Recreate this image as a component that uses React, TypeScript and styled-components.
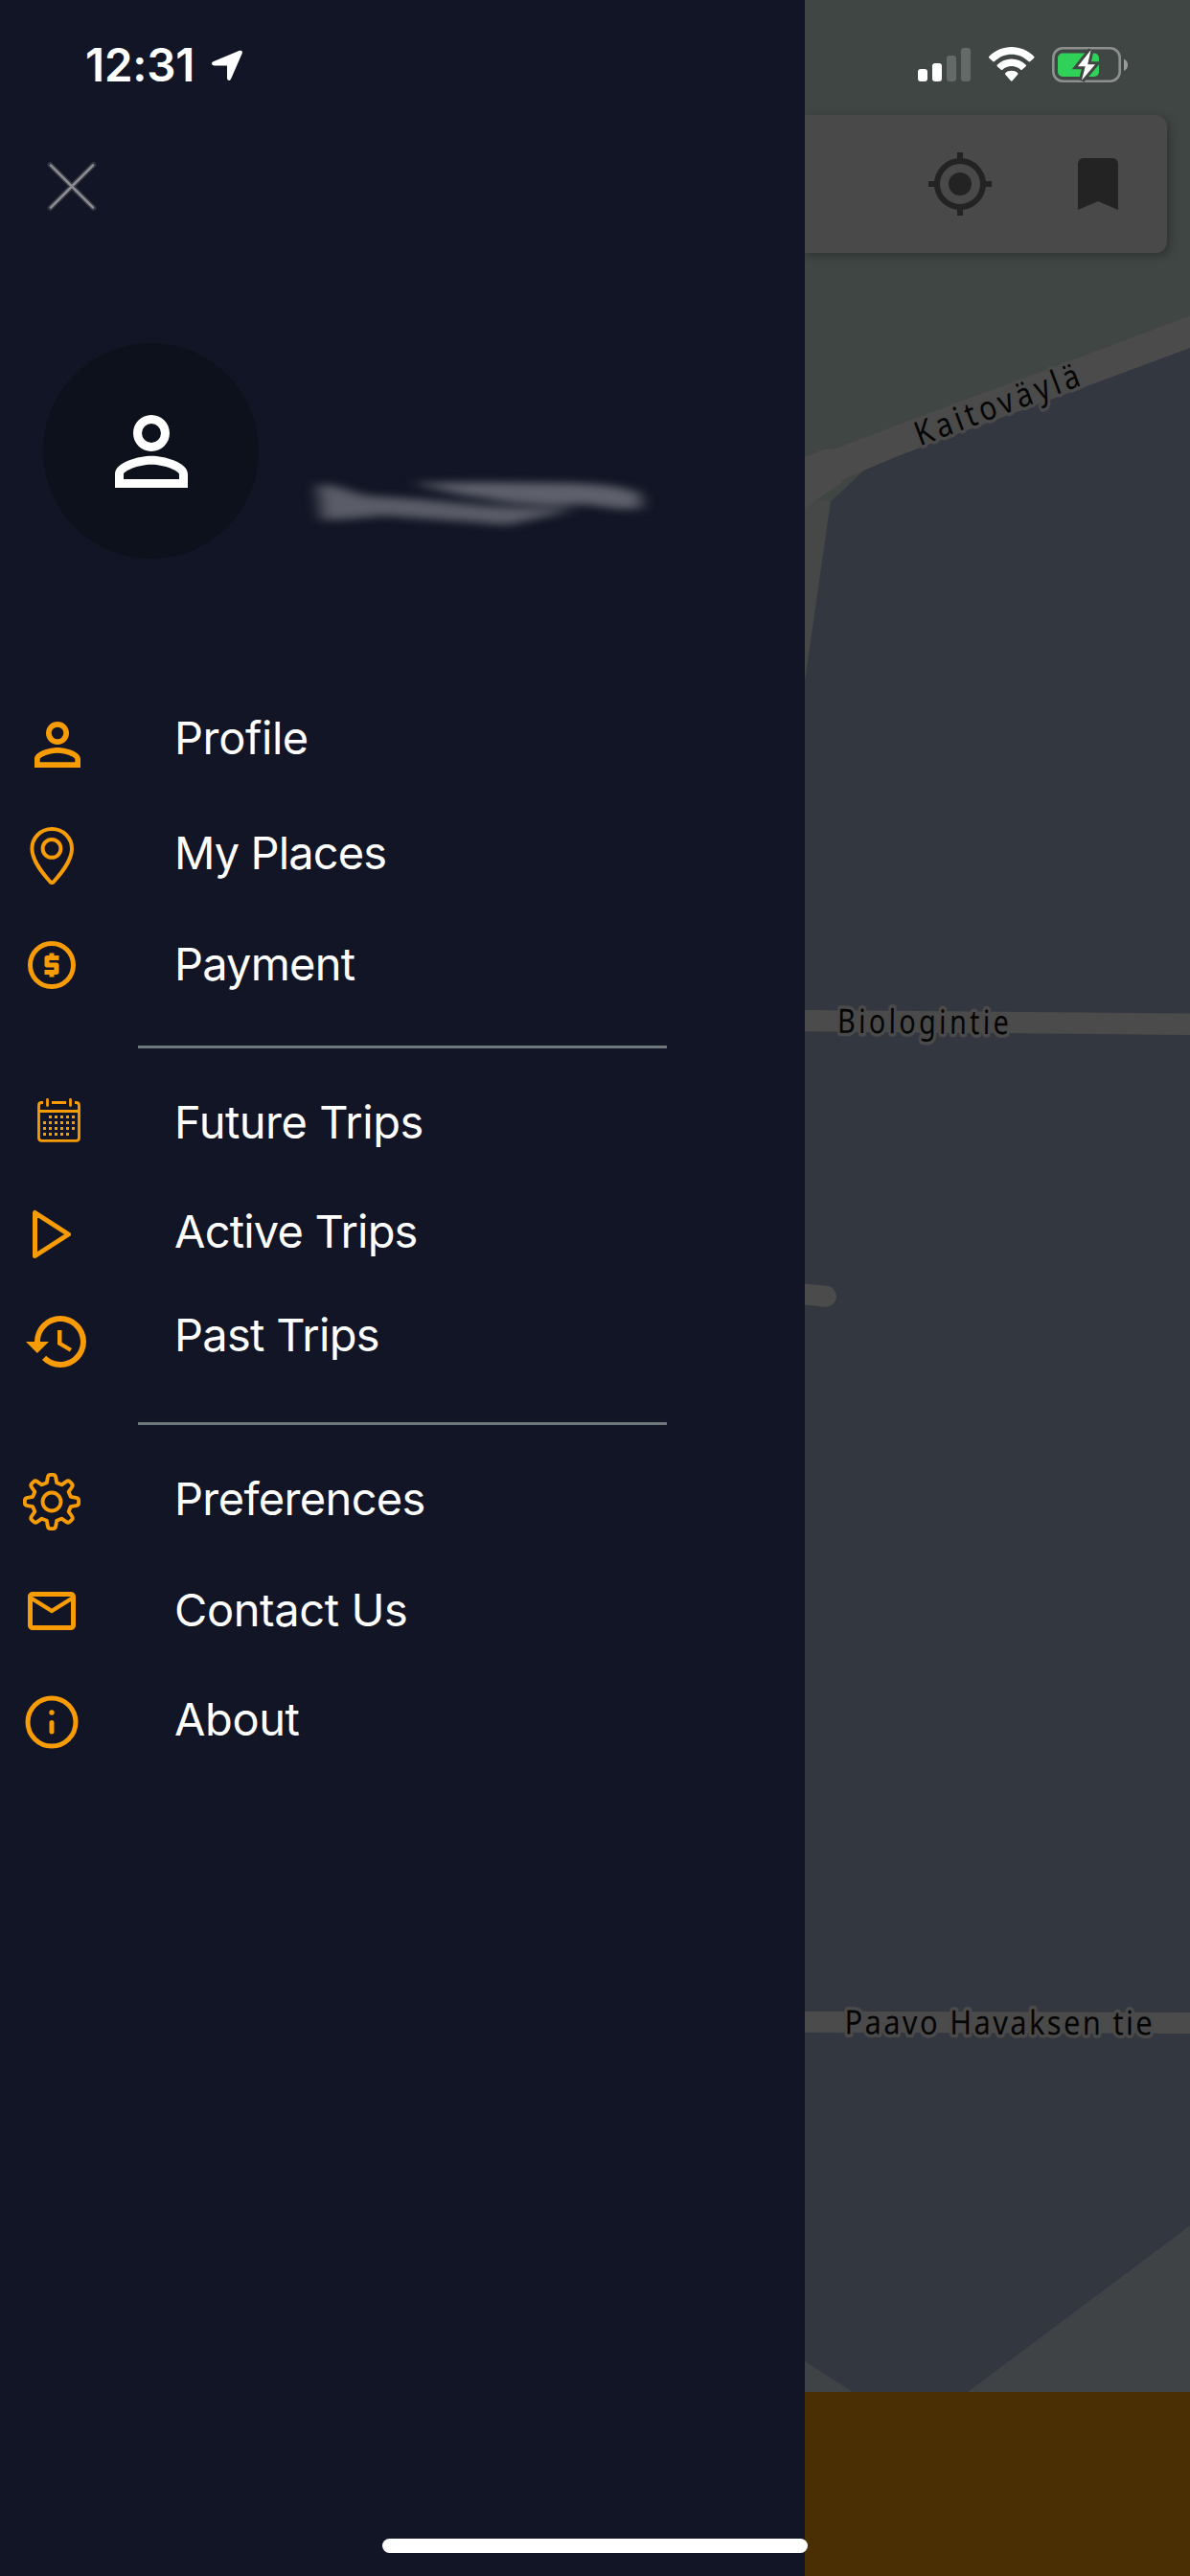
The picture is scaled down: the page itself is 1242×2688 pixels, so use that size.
import React from "react";
import styled, { createGlobalStyle } from "styled-components";

const GlobalStyle = createGlobalStyle`
  * { box-sizing: border-box; }
  body { margin: 0; background: #121525; }
  svg { display: block; flex: none; overflow: visible; }
`;

const Screen = styled.div`
  position: relative;
  display: flex;
  width: 1242px;
  height: 2688px;
  overflow: hidden;
  font-family: Inter, "Liberation Sans", sans-serif;
`;

const StatusBar = styled.header`
  position: absolute;
  inset: 0 0 auto 0;
  z-index: 2;
  display: flex;
  align-items: flex-start;
  justify-content: space-between;
  height: 132px;
  padding: 38px 64px 0 89px;
`;

const Clock = styled.div`
  display: flex;
  align-items: center;
  height: 60px;
  gap: 16px;
  color: #fff;
  font-size: 47.5px;
  font-weight: 600;
  line-height: 60px;
  letter-spacing: -0.2px;
`;

const Time = styled.span`
  width: 116px;
  white-space: nowrap;
`;

const Indicators = styled.div`
  display: flex;
  gap: 19px;
  padding-top: 11px;
`;

const Drawer = styled.nav`
  display: flex;
  flex-direction: column;
  flex: none;
  width: 840px;
  background: #121525;
`;

const CloseButton = styled.button`
  width: 60px;
  height: 60px;
  margin: 164px 0 0 45px;
  padding: 0;
  border: 0;
  background: none;
`;

const Account = styled.section`
  display: flex;
  align-items: flex-start;
  height: 225px;
  margin: 134px 0 157px 45px;
`;

const Avatar = styled.div`
  display: flex;
  align-items: center;
  justify-content: center;
  flex: none;
  width: 225px;
  height: 225px;
  border-radius: 50%;
  background: #0d111b;
  color: #fff;
`;

const NameSmudge = styled.svg`
  margin: 122px 0 0 40px;
`;

const MenuRow = styled.a<{ $height: number }>`
  display: flex;
  align-items: flex-start;
  height: ${(p) => p.$height}px;
  color: #fff;
`;

const IconSlot = styled.span<{ $shift: number }>`
  flex: none;
  width: 158px;
  margin: ${(p) => p.$shift}px 0 0 24px;
  color: #f79c04;
`;

const Label = styled.span<{ $tracking: number }>`
  font-size: 47px;
  font-weight: 400;
  line-height: 60px;
  letter-spacing: ${(p) => p.$tracking}px;
  white-space: nowrap;
`;

const Divider = styled.hr`
  flex: none;
  width: 552px;
  height: 3px;
  margin: 0 0 47px 144px;
  border: 0;
  background: #6e777b;
`;

const MapPane = styled.main`
  position: relative;
  display: flex;
  flex-direction: column;
  justify-content: space-between;
  width: 402px;
  padding-top: 120px;
  overflow: hidden;
`;

const MapCanvas = styled.svg`
  position: absolute;
  inset: 0;
`;

const SearchBar = styled.div`
  position: relative;
  display: flex;
  align-items: center;
  justify-content: flex-end;
  gap: 72px;
  width: 378px;
  height: 144px;
  padding-right: 36px;
  border-radius: 0 12px 12px 0;
  background: #494949;
  box-shadow: 3px 3px 8px rgba(20, 26, 24, 0.4);
  color: #232323;
`;

const BottomBar = styled.div`
  position: relative;
  height: 192px;
  background: #4a2e04;
`;

const HomeIndicator = styled.div`
  position: absolute;
  left: 399px;
  bottom: 24px;
  z-index: 2;
  width: 444px;
  height: 15px;
  border-radius: 8px;
  background: #fff;
`;

const personPath =
  "M12 5.9a2.1 2.1 0 1 1 0 4.2 2.1 2.1 0 0 1 0-4.2m0 9c2.97 0 6.1 1.46 6.1 2.1v1.1H5.9V17c0-.64 3.13-2.1 6.1-2.1M12 4C9.79 4 8 5.79 8 8s1.79 4 4 4 4-1.79 4-4-1.79-4-4-4zm0 9c-2.67 0-8 1.34-8 4v3h16v-3c0-2.66-5.33-4-8-4z";

const Person = ({ size }: { size: number }) => (
  <svg width={size} height={size} viewBox="0 0 24 24" fill="currentColor">
    <path d={personPath} />
  </svg>
);

const Pin = () => (
  <svg width="60" height="72" viewBox="0 0 60 72" fill="none" stroke="currentColor" strokeWidth="4">
    <path d="M30.2 8C18.6 8 9.4 17.2 9.4 28.6C9.4 42 22 56 28.3 63Q30.2 65 32.1 63C38.4 56 51 42 51 28.6C51 17.2 41.8 8 30.2 8Z" />
    <circle cx="30" cy="28.4" r="9.4" />
  </svg>
);

const Coin = () => (
  <svg width="60" height="60" viewBox="0 0 24 24" fill="currentColor">
    <circle cx="12" cy="12" r="9" fill="none" stroke="currentColor" strokeWidth="2" />
    <path d="M11 17h2v-1h1c.55 0 1-.45 1-1v-3c0-.55-.45-1-1-1h-3v-1h4V8h-2V7h-2v1h-1c-.55 0-1 .45-1 1v3c0 .55.45 1 1 1h3v1H9v2h2v1z" />
  </svg>
);

const calendarDots: [number, number][] = [];
for (let row = 0; row < 4; row++) {
  for (let col = 0; col < 6; col++) {
    if ((row === 0 && col === 0) || (row === 3 && col === 5)) continue;
    calendarDots.push([21 + col * 6, 30 + row * 6]);
  }
}

const Calendar = () => (
  <svg width="72" height="72" viewBox="0 0 72 72" fill="none" stroke="currentColor" strokeWidth="2.8">
    <path d="M21 16.500h-1.500q-3 0-3 3v33.800q0 3 3 3h36q3 0 3-3v-33.800q0-3-3-3H54M30 16.500h15M16.500 25.500h42" />
    <path d="M25.500 13.500v6M49.500 13.500v6" strokeLinecap="round" />
    {calendarDots.map(([x, y]) => (
      <rect key={`${x}-${y}`} x={x} y={y} width="3" height="3" fill="currentColor" stroke="none" />
    ))}
  </svg>
);

const Play = () => (
  <svg width="60" height="60" viewBox="0 0 60 60" fill="none" stroke="currentColor" strokeWidth="5" strokeLinejoin="round">
    <path d="M12.500 7.500v45L47.500 30z" />
  </svg>
);

const History = () => (
  <svg width="72" height="72" viewBox="0 0 24 24" fill="currentColor">
    <path d="M13 3a9 9 0 0 0-9 9H1l3.890 3.890.070.140L9 12H6c0-3.870 3.130-7 7-7s7 3.130 7 7-3.130 7-7 7c-1.930 0-3.680-.790-4.940-2.060l-1.420 1.420A8.954 8.954 0 0 0 13 21a9 9 0 0 0 0-18zm-1 5v5l4.280 2.540.720-1.210-3.500-2.080V8H12z" />
  </svg>
);

const gearPath = (() => {
  const parts: string[] = [];
  const turn = (x: number, y: number, deg: number) => {
    const a = (deg * Math.PI) / 180;
    return `${(x * Math.cos(a) - y * Math.sin(a)).toFixed(2)} ${(x * Math.sin(a) + y * Math.cos(a)).toFixed(2)}`;
  };
  for (let i = 0; i < 8; i++) {
    const p = (x: number, y: number) => turn(x, y, i * 45);
    parts.push(
      `${i ? "L" : "M"}${p(-5.2, -19.8)}L${p(-4.2, -25.4)}Q${p(-3.7, -28.1)} ${p(-1.5, -28.1)}` +
        `L${p(1.5, -28.1)}Q${p(3.7, -28.1)} ${p(4.2, -25.4)}L${p(5.2, -19.8)}`
    );
  }
  return parts.join("") + "Z";
})();

const Gear = () => (
  <svg width="60" height="60" viewBox="-30 -30 60 60" fill="none" stroke="currentColor" strokeWidth="3.9" strokeLinejoin="round">
    <path d={gearPath} />
    <circle r="9.5" />
  </svg>
);

const Mail = () => (
  <svg width="60" height="60" viewBox="0 0 24 24" fill="currentColor">
    <path d="M22 6c0-1.100-.900-2-2-2H4c-1.100 0-2 .900-2 2v12c0 1.100.900 2 2 2h16c1.100 0 2-.900 2-2V6zm-2 0l-8 5-8-5h16zm0 12H4V8l8 5 8-5v10z" />
  </svg>
);

const Info = () => (
  <svg width="60" height="60" viewBox="0 0 60 60" fill="none" stroke="currentColor" strokeWidth="5">
    <circle cx="30" cy="30" r="25" />
    <circle cx="30" cy="20" r="2.7" fill="currentColor" stroke="none" />
    <path d="M30 30.500v9.500" strokeLinecap="round" />
  </svg>
);

type Item = { label: string; icon: React.ReactNode; shift: number; height: number; tracking: number };

const groups: Item[][] = [
  [
    { label: "Profile", icon: <Person size={72} />, shift: 1, height: 120, tracking: -0.4 },
    { label: "My Places", icon: <Pin />, shift: -3, height: 116, tracking: -0.9 },
    { label: "Payment", icon: <Coin />, shift: 1, height: 115, tracking: -0.8 },
  ],
  [
    { label: "Future Trips", icon: <Calendar />, shift: -7, height: 114, tracking: -0.5 },
    { label: "Active Trips", icon: <Play />, shift: 3, height: 108, tracking: -0.8 },
    { label: "Past Trips", icon: <History />, shift: 1, height: 121, tracking: -0.7 },
  ],
  [
    { label: "Preferences", icon: <Gear />, shift: 3, height: 116, tracking: -0.65 },
    { label: "Contact Us", icon: <Mail />, shift: 1, height: 114, tracking: -0.4 },
    { label: "About", icon: <Info />, shift: 3, height: 114, tracking: -0.4 },
  ],
];

const StreetName = styled.text`
  font-family: "Noto Sans", "Open Sans", sans-serif;
  font-size: 35px;
  fill: #050505;
  stroke: #4a4a4a;
  stroke-width: 7px;
  stroke-linejoin: round;
  paint-order: stroke;
`;

const MapArt = () => (
  <MapCanvas width="402" height="2688" viewBox="840 0 402 2688">
    <rect x="840" width="402" height="2688" fill="#404644" />
    <path d="M840 523H867L840 720Z" fill="#464747" />
    <path d="M1242 350L902 490.500L867 523.500L840 711V2500H1242Z" fill="#333740" />
    <path d="M840 477L860 469H870L930 446L1097 384L1242 329.500V363L1133 403.500L962 466.500L933 477.500L902 490.700L882 499L878 504L853 521L840 532Z" fill="#4b4b4b" />
    <path d="M840 1054L1242 1057.500V1080L840 1076.200Z" fill="#4b4b4b" />
    <path d="M820 1348.500L862 1352.700" stroke="#4b4b4b" strokeWidth="22" strokeLinecap="round" />
    <path d="M840 2098.800L1242 2100V2122L840 2120.800Z" fill="#4b4b4b" />
    <path d="M1242 2322.500L1010 2496H1242ZM840 2464L890 2496H840Z" fill="#404345" />
    <StreetName transform="translate(960 465.500) rotate(-20.600) scale(.85 1)" textLength="213">Kaitoväylä</StreetName>
    <StreetName transform="translate(874 1077.700) rotate(.5) scale(.82 1)" textLength="218">Biologintie</StreetName>
    <StreetName transform="translate(881.500 2122.500) rotate(.15) scale(.88 1)" textLength="365">Paavo Havaksen tie</StreetName>
  </MapCanvas>
);

export default function App() {
  return (
    <>
      <GlobalStyle />
      <Screen>
        <StatusBar>
          <Clock>
            <Time>12:31</Time>
            <svg width="32" height="32" viewBox="0 0 32 32" fill="#fff">
              <path d="M1.500 12.200L29 .800Q32.500 0 31.800 3.500L20 30.500Q19 32.500 17.500 31.700Q16 31.300 16 29.500V16.500H2.500Q0 16.200 0 14.200Q0 12.800 1.500 12.200Z" />
            </svg>
          </Clock>
          <Indicators>
            <svg width="55" height="36" viewBox="0 0 55 36">
              <rect y="23" width="10" height="13" rx="3" fill="#fff" />
              <rect x="15" y="17" width="10" height="19" rx="3" fill="#fff" />
              <rect x="30" y="9" width="10" height="27" rx="3" fill="#646a68" />
              <rect x="45" y="1" width="10" height="35" rx="3" fill="#646a68" />
            </svg>
            <svg width="47" height="36" viewBox="0 0 47 36" fill="#fff">
              <path d="M0 10.300C13-3.300 34.400-3.300 47.500 10.300Q47.800 11 47 11.800L43 15.200Q42.200 15.700 41.500 15.100C31.300 5.300 16 5.300 6 15.100Q5.200 15.700 4.500 15.200L.600 11.800Q-.300 11 0 10.300Z" />
              <path d="M8.700 18.700C17 10.400 30.500 10.400 38.800 18.700Q39.300 19.500 38.700 20.200L34.700 23.700Q34 24.200 33.200 23.700C27.700 18.700 19.700 18.700 14.300 23.700Q13.500 24.200 12.800 23.700L8.800 20.200Q8.200 19.500 8.700 18.700Z" />
              <path d="M17.200 27.200C20.900 24 26.600 24 30.300 27.200Q30.800 27.900 30.200 28.700L24.600 35.200Q23.800 36.100 22.900 35.200L17.300 28.700Q16.700 27.900 17.200 27.200Z" />
            </svg>
            <svg width="80" height="37" viewBox="0 0 80 37">
              <rect x="1.300" y="1.300" width="69.400" height="34.400" rx="10" fill="none" stroke="#8d908f" strokeWidth="2.600" />
              <path d="M75 12.500Q79 14.500 79 18.700T75 25Z" fill="#9a9d9c" />
              <rect x="6" y="6.500" width="43" height="24.500" rx="5" fill="#2fd158" />
              <path d="M40.500 3.300L27 20.200H34.700L31 34.700L45 18.300H37.200Z" fill="#fff" stroke="#404644" strokeWidth="6" paintOrder="stroke" />
            </svg>
          </Indicators>
        </StatusBar>

        <Drawer>
          <CloseButton aria-label="Close">
            <svg width="60" height="60" viewBox="0 0 60 60" strokeLinecap="round">
              <path d="M7.500 8L52.500 53M52.500 8L7.500 53" stroke="#4b5058" strokeWidth="6" opacity=".55" />
              <path d="M8 8.500L52 52.500M52 8.500L8 52.500" stroke="#8b8a90" strokeWidth="2.600" />
            </svg>
          </CloseButton>
          <Account>
            <Avatar>
              <Person size={114} />
            </Avatar>
            <NameSmudge width="380" height="90" viewBox="310 480 380 90">
              <defs>
                <filter id="smudge" x="-20%" y="-80%" width="140%" height="260%" colorInterpolationFilters="sRGB">
                  <feGaussianBlur stdDeviation="8 4.500" />
                </filter>
              </defs>
              <g filter="url(#smudge)">
                <path
                  d="M331 505L350 507L380 517L440 521L510 528L570 531L600 532L560 541L530 548L495 545L440 541L400 538L370 541L336 543Z"
                  fill="#5a5d67"
                />
                <path
                  d="M430 504L500 503L600 504L640 507L668 514L670 531L645 531L610 526L575 528L530 524L480 516Z"
                  fill="#5e616b"
                />
              </g>
            </NameSmudge>
          </Account>
          {groups.map((items, i) => (
            <React.Fragment key={i}>
              {i > 0 && <Divider />}
              {items.map((it) => (
                <MenuRow key={it.label} $height={it.height}>
                  <IconSlot $shift={it.shift}>{it.icon}</IconSlot>
                  <Label $tracking={it.tracking}>{it.label}</Label>
                </MenuRow>
              ))}
            </React.Fragment>
          ))}
        </Drawer>

        <MapPane>
          <MapArt />
          <SearchBar>
            <svg width="72" height="72" viewBox="0 0 24 24" fill="currentColor">
              <circle cx="12" cy="12" r="4" />
              <circle cx="12" cy="12" r="8" fill="none" stroke="currentColor" strokeWidth="2" />
              <path d="M11 1h2v3h-2zM11 20h2v3h-2zM1 11h3v2H1zM20 11h3v2h-3z" />
            </svg>
            <svg width="72" height="72" viewBox="0 0 24 24" fill="currentColor">
              <path d="M17 3H7c-1.100 0-2 .900-2 2v16l7-3 7 3V5c0-1.100-.900-2-2-2z" />
            </svg>
          </SearchBar>
          <BottomBar />
        </MapPane>
        <HomeIndicator />
      </Screen>
    </>
  );
}
